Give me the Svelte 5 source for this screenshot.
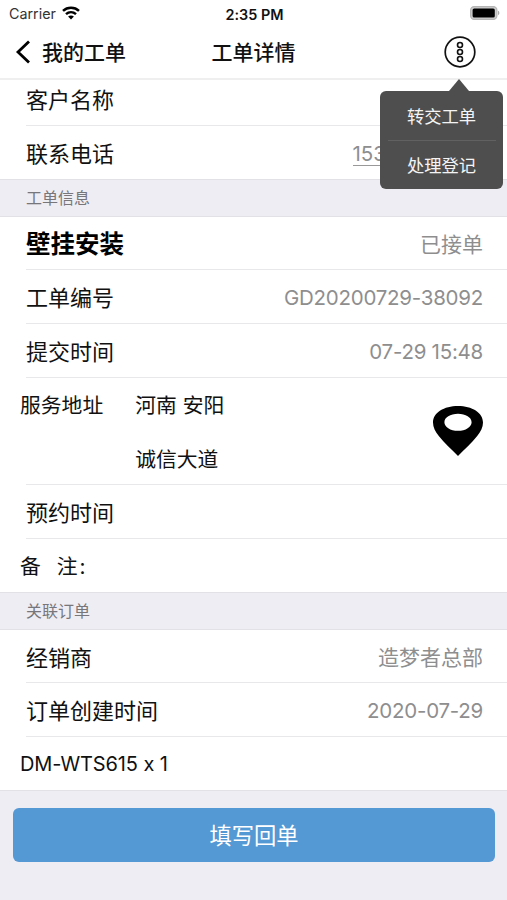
<script lang="ts">
	type Row = { label: string; value?: string; strong?: boolean; short?: boolean };

	const customerRows: Row[] = [
		{ label: '客户名称' },
		{ label: '联系电话', short: true }
	];

	const orderRows: Row[] = [
		{ label: '壁挂安装', value: '已接单', strong: true, short: true },
		{ label: '工单编号', value: 'GD20200729-38092' },
		{ label: '提交时间', value: '07-29 15:48' }
	];

	const relatedRows: Row[] = [
		{ label: '经销商', value: '造梦者总部', short: true },
		{ label: '订单创建时间', value: '2020-07-29' }
	];

	const actions = ['转交工单', '处理登记'];

	let menuOpen = $state(true);
</script>

{#snippet cell(row: Row)}
	<div class="row" class:short={row.short}>
		<span class="label" class:strong={row.strong}>{row.label}</span>
		{#if row.value}
			<span class="value" class:latin={/^[\w]/.test(row.value)}>{row.value}</span>
		{/if}
	</div>
{/snippet}

<div class="screen">
	<header>
		<div class="status-bar">
			<div class="carrier">
				<span>Carrier</span>
				<svg width="18" height="14" viewBox="0 0 18 14" fill="none" stroke="#000" stroke-width="2.5">
					<path d="M1 4.8C5.5 .6 12.5 .6 17 4.8" />
					<path d="M4 8.1c2.9-2.6 7.1-2.6 10 0" />
					<path d="M9 13.4 6.1 10.5c1.6-1.5 4.2-1.5 5.8 0z" fill="#000" stroke="none" />
				</svg>
			</div>
			<span class="time">2:35 PM</span>
			<svg class="battery" width="30" height="14" viewBox="0 0 30 14">
				<rect x=".6" y=".6" width="26.3" height="12.8" rx="3.6" fill="#ccc" stroke="#b5b5b5" stroke-width="1.2" />
				<rect x="2.6" y="2.4" width="22.2" height="9.2" rx="1.6" />
				<path d="M28 4.8c1.8.6 1.8 3.8 0 4.4z" fill="#aaa" />
			</svg>
		</div>
		<nav>
			<button class="back">
				<svg width="16" height="24" viewBox="0 0 16 24" fill="none" stroke="#000" stroke-width="2.8">
					<path d="M14 1.4 3 12l11 10.6" />
				</svg>
				<span>我的工单</span>
			</button>
			<h1>工单详情</h1>
			<div class="more-wrap">
				<button class="more" aria-label="更多" onclick={() => (menuOpen = !menuOpen)}>
					<svg width="32" height="32" viewBox="0 0 32 32" fill="none" stroke="#111">
						<circle cx="16" cy="16" r="14.8" stroke-width="1.7" />
						<circle cx="16" cy="9" r="2.5" stroke-width="1.6" />
						<circle cx="16" cy="16" r="2.5" stroke-width="1.6" />
						<circle cx="16" cy="23" r="2.5" stroke-width="1.6" />
					</svg>
				</button>
				{#if menuOpen}
					<div class="menu">
						{#each actions as action}
							<button class="menu-item">{action}</button>
						{/each}
					</div>
				{/if}
			</div>
		</nav>
	</header>

	<main>
		<div class="group first">
			{@render cell(customerRows[0])}
			<div class="row short">
				<span class="label">{customerRows[1].label}</span>
				<span class="phone">153</span>
			</div>
		</div>

		<h2>工单信息</h2>
		<div class="group">
			{#each orderRows as row}
				{@render cell(row)}
			{/each}
			<div class="row address">
				<span class="sub-label">服务地址</span>
				<div class="address-lines">
					<span>河南 安阳</span>
					<span>诚信大道</span>
				</div>
				<svg class="pin" width="50" height="50" viewBox="0 0 50 50">
					<path
						fill-rule="evenodd"
						d="M25 0C39 0 50 6.8 50 16.5c0 5-2.3 9.2-5.8 13.5C38.5 37 31.5 43.5 25 50 18.5 43.5 11.5 37 5.8 30 2.3 25.7 0 21.5 0 16.5 0 6.8 11 0 25 0zM25 7.8c-7.700 0-13.600 3.600-13.600 8.400S17.300 24.800 25 24.800s13.600-3.800 13.600-8.600S32.700 7.800 25 7.800z"
					/>
				</svg>
			</div>
			<div class="row">
				<span class="label">预约时间</span>
			</div>
			<div class="row short remark">
				<span>备</span>
				<span>注<span class="colon">:</span></span>
			</div>
		</div>

		<h2>关联订单</h2>
		<div class="group">
			{#each relatedRows as row}
				{@render cell(row)}
			{/each}
			<div class="row short">
				<span class="product">DM-WTS615 x 1</span>
			</div>
		</div>
	</main>

	<footer>
		<button class="submit">填写回单</button>
	</footer>
</div>

<style>
	:global(body) {
		margin: 0;
		background: #eeedf3;
	}

	.screen {
		height: 900px;
		display: flex;
		flex-direction: column;
		overflow: hidden;
		background: #eeedf3;
		color: #111;
		font-family: Inter, 'Noto Sans CJK SC', sans-serif;
		font-feature-settings: 'calt' 0;
	}

	button {
		margin: 0;
		padding: 0;
		border: 0;
		background: none;
		color: inherit;
		font: inherit;
		cursor: pointer;
	}

	svg {
		display: block;
	}

	header {
		position: relative;
		z-index: 2;
		flex: none;
		box-sizing: border-box;
		height: 80px;
		background: #fff;
		border-bottom: 2px solid #efeff0;
	}

	.status-bar {
		display: grid;
		grid-template-columns: 1fr auto 1fr;
		align-items: center;
		height: 26px;
		padding: 0 7px 0 9px;
		font-size: 14px;
	}

	.carrier {
		display: flex;
		align-items: center;
		gap: 6px;
		color: #333;
		font-size: 14.3px;
	}

	.time {
		font-size: 14.4px;
		font-weight: 600;
		padding-top: 2px;
	}

	.battery {
		justify-self: end;
	}

	nav {
		display: grid;
		grid-template-columns: 1fr auto 1fr;
		align-items: center;
		height: 52px;
		padding: 0 15px;
	}

	.back {
		display: flex;
		align-items: center;
		gap: 11px;
		font-size: 21px;
		font-weight: 500;
	}

	.back span,
	h1 {
		padding-bottom: 2px;
	}

	h1 {
		margin: 0;
		font-size: 21px;
		font-weight: 500;
	}

	.more-wrap {
		position: relative;
		justify-self: end;
		margin: 0 16px 0 0;
	}

	.more {
		display: block;
	}

	.menu {
		position: absolute;
		top: 55px;
		right: -27px;
		box-sizing: border-box;
		width: 123px;
		height: 98px;
		padding: 0 7px 0 8px;
		border-radius: 6px;
		background: #4e4e4e;
	}

	.menu::before {
		content: '';
		position: absolute;
		top: -12px;
		left: 69px;
		border: 10px solid transparent;
		border-top: 0;
		border-bottom: 12px solid #4e4e4e;
	}

	.menu-item {
		display: block;
		width: 100%;
		height: 49px;
		padding-right: 1px;
		color: #f4f4f4;
		font-size: 17.3px;
	}

	.menu-item + .menu-item {
		padding-bottom: 2px;
		border-top: 1px solid #616161;
	}

	/* the list is scrolled a little way under the header */
	.first {
		margin-top: -8px;
	}

	.group {
		background: #fff;
	}

	.row {
		position: relative;
		box-sizing: border-box;
		height: 54px;
		display: flex;
		align-items: center;
		padding: 0 24px 2px 20px;
	}

	.row.short {
		height: 53px;
	}

	.row:not(:last-child)::after {
		content: '';
		position: absolute;
		left: 26px;
		right: 0;
		bottom: 0;
		height: 1px;
		background: #e8e8ea;
	}

	.label {
		margin-left: 6px;
		font-size: 22px;
	}

	.label.strong {
		font-size: 24.5px;
		font-weight: 700;
		color: #000;
	}

	.value,
	.phone {
		margin-left: auto;
		color: #8e8e8f;
		font-size: 21px;
	}

	.value.latin {
		font-size: 20.5px;
		letter-spacing: -0.25px;
		padding-top: 2px;
	}

	.phone {
		margin: 5px 97px 0 auto;
		border-bottom: 1px solid #999;
		font-size: 20.5px;
		line-height: 22px;
	}

	.sub-label {
		font-size: 20.8px;
	}

	.row.address {
		height: 107px;
		align-items: flex-start;
		padding-bottom: 0;
	}

	.address .sub-label,
	.address-lines span {
		line-height: 55px;
	}

	.address-lines {
		display: flex;
		flex-direction: column;
		margin-left: 32px;
		font-size: 20.8px;
	}

	.address-lines span + span {
		line-height: 53px;
	}

	.pin {
		align-self: center;
		margin: 0 0 1px auto;
	}

	.remark {
		gap: 16px;
		font-size: 20.8px;
	}

	.colon {
		margin-left: 2px;
	}

	.product {
		padding-top: 2px;
		font-size: 20px;
		letter-spacing: -0.1px;
	}

	h2 {
		box-sizing: border-box;
		height: 38px;
		margin: 0;
		padding-left: 26px;
		border: solid #e2e1e6;
		border-width: 1px 0;
		color: #77767b;
		font-size: 16px;
		font-weight: 400;
		line-height: 36px;
	}

	footer {
		padding: 17px 12px 0 13px;
		border-top: 1px solid #e2e1e6;
	}

	.submit {
		width: 100%;
		height: 54px;
		padding-bottom: 2px;
		border-radius: 6px;
		background: #5498d4;
		color: #fff;
		font-size: 22.3px;
	}
</style>
